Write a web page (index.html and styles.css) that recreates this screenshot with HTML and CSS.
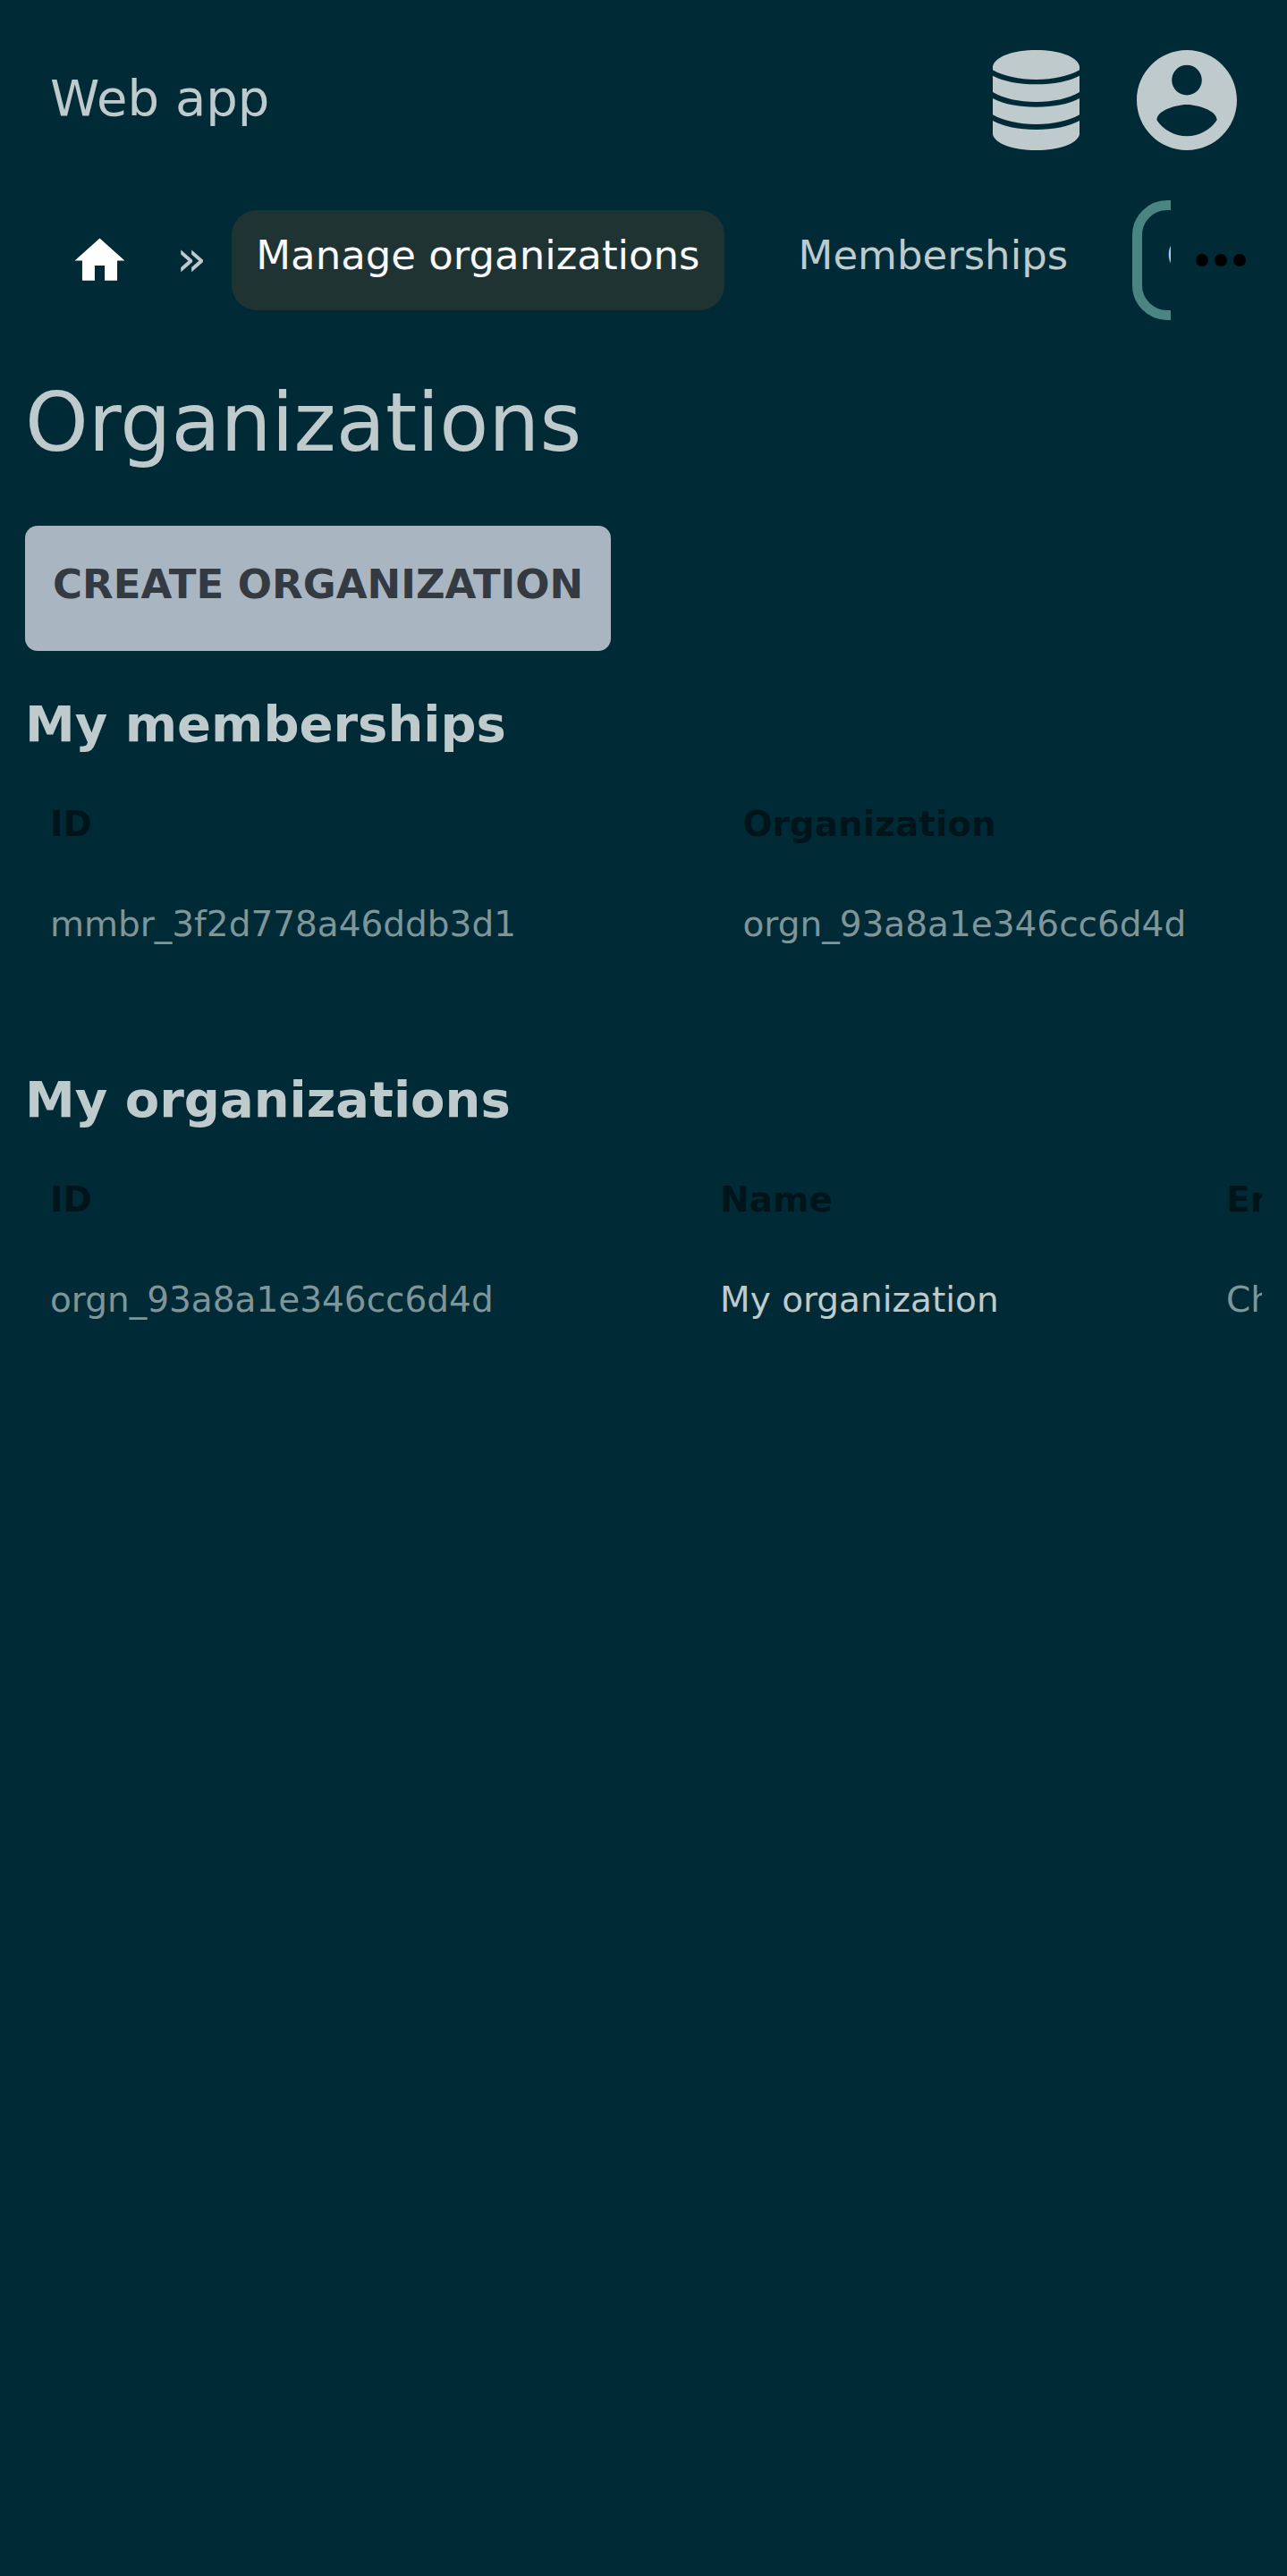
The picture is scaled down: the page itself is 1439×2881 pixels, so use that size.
FILE: index.html
```html
<!DOCTYPE html>
<html lang="en">
<head>
<meta charset="utf-8">
<meta name="viewport" content="width=device-width, initial-scale=1">
<title>Organizations - Web app</title>
<link rel="stylesheet" href="styles.css">
</head>
<body>
<header class="topbar">
  <a class="brand" href="#">Web app</a>
  <div class="topbar-actions">
    <a class="icon-link" href="#" aria-label="Data">
      <svg class="icon-database" viewBox="0 0 98 112" aria-hidden="true">
        <path d="M0 18C3 7 23 0 48.500 0S94 7 97 18V22.300C85 29 68 33 48.500 33S12 29 0 22.300z"/>
        <path d="M0 28.700C12 35 29 38.300 48.500 38.300S85 35 97 28.700V47C85 54 68 58 48.500 58S12 54 0 47z"/>
        <path d="M0 54C12 60.500 29 63.700 48.500 63.700S85 60.500 97 54V72.300C85 79 68 83 48.500 83S12 79 0 72.300z"/>
        <path d="M0 79C12 85.500 29 89 48.500 89S85 85.500 97 79V94.500C94 105 74 112 48.500 112S3 105 0 94.500z"/>
      </svg>
    </a>
    <a class="icon-link" href="#" aria-label="Account">
      <svg class="icon-account" viewBox="2 2 20 20" aria-hidden="true">
        <path d="M12 2C6.480 2 2 6.480 2 12s4.480 10 10 10 10-4.480 10-10S17.520 2 12 2zm0 3c1.660 0 3 1.340 3 3s-1.340 3-3 3-3-1.340-3-3 1.340-3 3-3zm0 14.200c-2.500 0-4.710-1.280-6-3.220.03-1.990 4-3.080 6-3.080 1.990 0 5.970 1.090 6 3.080-1.290 1.940-3.500 3.220-6 3.220z"/>
      </svg>
    </a>
  </div>
</header>

<nav class="nav" aria-label="Main">
  <div class="nav-scroll">
    <a class="nav-home" href="#" aria-label="Home">
      <svg class="icon-home" viewBox="0 0 24 24" aria-hidden="true"><path d="M10 20v-6h4v6h5v-8h3L12 3 2 12h3v8z"/></svg>
    </a>
    <span class="nav-separator">»</span>
    <div class="nav-items">
      <a class="nav-item nav-item-current" href="#">Manage organizations</a>
      <a class="nav-item" href="#">Memberships</a>
      <a class="nav-item nav-item-outlined" href="#">Organizations</a>
    </div>
  </div>
  <button class="nav-more" type="button" aria-label="More">
    <svg class="icon-more" viewBox="0 0 24 24" aria-hidden="true"><circle cx="6" cy="12" r="2"/><circle cx="12" cy="12" r="2"/><circle cx="18" cy="12" r="2"/></svg>
  </button>
</nav>

<main class="content">
  <h1 class="title">Organizations</h1>
  <button class="button" type="button">CREATE ORGANIZATION</button>

  <section class="section">
    <h2 class="section-title">My memberships</h2>
    <div class="table-wrap">
      <table class="table">
        <colgroup><col class="col-member"><col></colgroup>
        <thead><tr><th>ID</th><th>Organization</th></tr></thead>
        <tbody><tr><td>mmbr_3f2d778a46ddb3d1</td><td>orgn_93a8a1e346cc6d4d</td></tr></tbody>
      </table>
    </div>
  </section>

  <section class="section">
    <h2 class="section-title">My organizations</h2>
    <div class="table-wrap">
      <table class="table table-wide">
        <colgroup><col class="col-id"><col class="col-name"><col></colgroup>
        <thead><tr><th>ID</th><th>Name</th><th>Environment</th></tr></thead>
        <tbody><tr><td>orgn_93a8a1e346cc6d4d</td><td class="cell-strong">My organization</td><td>Change</td></tr></tbody>
      </table>
    </div>
  </section>
</main>
</body>
</html>
```
FILE: styles.css
```css
:root {
  --background: #002b36;
  --text: #bfcacd;
  --muted: #7f959a;
  --heading: #00151b;
  --bright: #f9f9fb;
}

* { box-sizing: border-box; }

body {
  margin: 0;
  min-height: 100vh;
  background: var(--background);
  color: var(--text);
  font-family: "DejaVu Sans", sans-serif;
  font-size: 45px;
  line-height: 56px;
}

a { color: inherit; text-decoration: none; }
svg { display: block; fill: currentColor; }
button { font: inherit; border: 0; cursor: pointer; }

.topbar {
  display: flex;
  align-items: center;
  justify-content: space-between;
  padding: 56px;
}
.brand { padding-bottom: 4px; font-size: 56px; }
.topbar-actions { display: flex; gap: 56px; }
.icon-link {
  display: flex;
  justify-content: center;
  width: 112px;
  height: 112px;
}
.icon-database { width: 98px; height: 112px; }
.icon-account { width: 112px; height: 112px; }

.nav { display: flex; align-items: center; }
.nav-scroll {
  display: flex;
  flex: 1;
  align-items: center;
  min-width: 0;
  padding: 11px 0 11px 50px;
  overflow: hidden;
}
.nav-home { padding: 0 28px; color: #fff; }
.icon-home { width: 67px; height: 67px; }
.nav-separator { padding: 0 28px 4px 24px; font-size: 56px; }
.nav-items { display: flex; gap: 56px; }
.nav-item {
  padding: 23px 27px 33px;
  border-radius: 28px;
  white-space: nowrap;
}
.nav-item-current { background: #1f3333; color: var(--bright); }
.nav-item-outlined { outline: 11px solid #4a8583; }
.nav-more {
  flex: none;
  padding: 0 32px 0 14px;
  background: none;
  color: #000;
}
.icon-more { width: 84px; height: 84px; }

.content { padding: 56px 28px; }
.title {
  margin: 0 0 56px;
  font-size: 90px;
  font-weight: 400;
  line-height: 118px;
}
.button {
  padding: 38px 31px 46px;
  border-radius: 14px;
  background: #a9b5c1;
  color: #343a42;
  font-weight: 700;
}
.section { margin-bottom: 58px; }
.section-title {
  margin: 0;
  padding: 40px 0 14px;
  font-size: 56px;
  font-weight: 700;
  line-height: 84px;
}
.table-wrap { overflow: hidden; }
.table {
  width: 100%;
  border-collapse: collapse;
  table-layout: fixed;
  color: var(--muted);
  font-size: 39px;
  text-align: left;
  white-space: nowrap;
}
.table-wide { width: 125%; }
.table th, .table td { height: 112px; padding: 28px; }
.table th { color: var(--heading); }
.table .cell-strong { color: var(--text); }
.col-member { width: 56%; }
.col-id { width: 749px; }
.col-name { width: 566px; }
```
